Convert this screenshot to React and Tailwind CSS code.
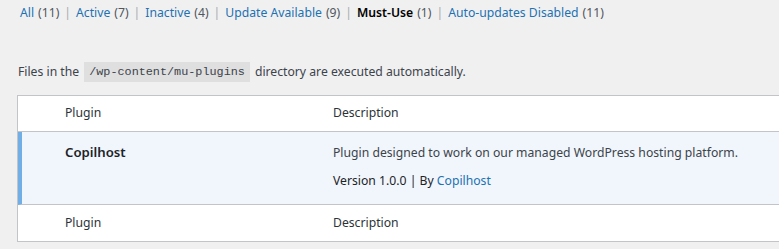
import React from "react"

const filters = [
  { label: "All", count: 11 },
  { label: "Active", count: 7 },
  { label: "Inactive", count: 4 },
  { label: "Update Available", count: 9 },
  { label: "Must-Use", count: 1, current: true },
  { label: "Auto-updates Disabled", count: 11 },
]

const HeadRow = ({ bottom }) => (
  <div className={`flex h-[36px] items-center text-[#2c3338] ${bottom ? "" : "border-b border-[#c3c4c7]"}`}>
    <div className="w-[315px] pl-[47px]">Plugin</div>
    <div>Description</div>
  </div>
)

export default function App() {
  return (
    <div className="min-h-[249px] w-[779px] overflow-hidden bg-[#f0f0f1] font-['Noto_Sans',sans-serif] text-[12.2px] text-[#3c434a]">
      {/* Status filters */}
      <ul className="flex h-[26px] items-center whitespace-nowrap pl-[20px] text-[#646970]">
        {filters.map((f, i) => (
          <li key={f.label} className="flex items-center">
            {f.current ? (
              <span className="font-semibold text-black">{f.label}</span>
            ) : (
              <span className="text-[#2271b1]">{f.label}</span>
            )}
            <span className="ml-[4px] text-[#50575e]">({f.count})</span>
            {i < filters.length - 1 && <span className="mx-[5px] text-[#a7aaad]">|</span>}
          </li>
        ))}
      </ul>

      <p className="mt-[36px] flex items-center whitespace-nowrap pl-[18px]">
        Files in the
        <code className="mx-[5px] bg-[#dfdfe0] px-[5px] py-[2px] font-['Liberation_Mono',monospace] text-[11.8px] leading-[16px]">
          /wp-content/mu-plugins
        </code>
        directory are executed automatically.
      </p>

      <div className="ml-[17px] mt-[13px] w-[800px] border border-[#c3c4c7] bg-white">
        <HeadRow />
        <div className="flex h-[73px] border-b border-l-4 border-[#c3c4c7] border-l-[#72aee6] bg-[#f0f6fc] pt-[11px]">
          <div className="w-[311px] pl-[43px] text-[13.2px] font-semibold text-[#1d2327]">Copilhost</div>
          <div>
            <p className="leading-[20px]">Plugin designed to work on our managed WordPress hosting platform.</p>
            <p className="mt-[8px] leading-[20px] text-[#1d2327]">
              Version 1.0.0 | By <span className="text-[#2271b1]">Copilhost</span>
            </p>
          </div>
        </div>
        <HeadRow bottom />
      </div>
    </div>
  )
}
